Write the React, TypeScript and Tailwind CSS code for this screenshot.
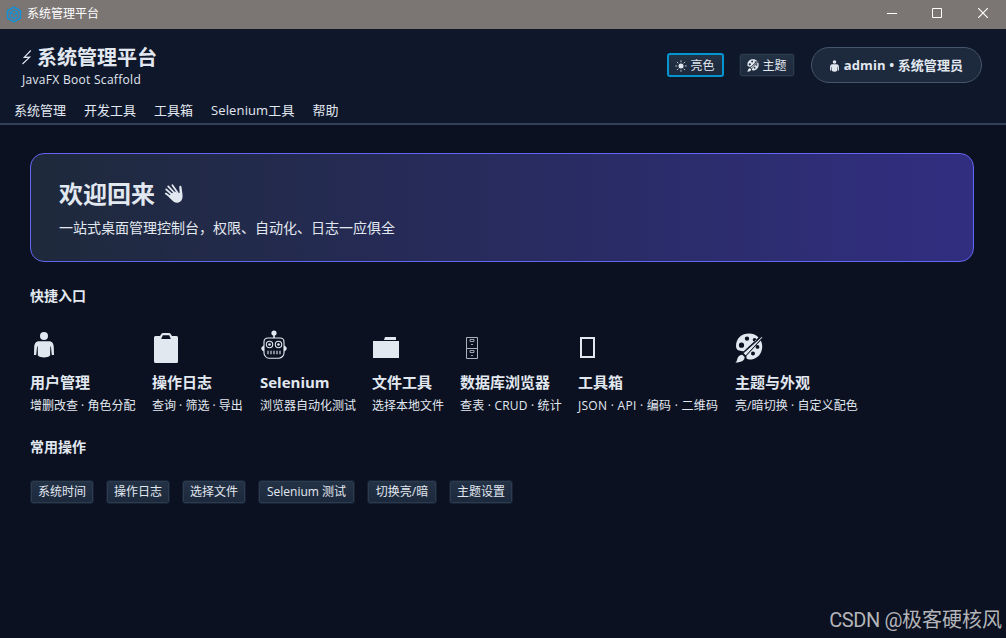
import React from 'react';

interface IconProps {
  className?: string;
}

interface QuickEntry {
  title: string;
  desc: string;
  width: string;
  tracking?: string;
  icon: React.ReactNode;
}

const PersonIcon: React.FC<IconProps> = ({ className }) => (
  <svg viewBox="0 0 20 26" className={className} fill="currentColor">
    <circle cx="10" cy="4" r="4" />
    <path d="M5 9.2h10c3.2 0 4.6 2.2 4.8 6l.2 7.8h-2.2l-.9-8.6h-.6l-.2 9.2c-1.5 1.4-3.6 1.9-6.1 1.9s-4.6-.5-6.1-1.9l-.2-9.2h-.6L2.2 23H0l.2-7.8c.2-3.8 1.6-6 4.8-6z" />
  </svg>
);

const ClipboardIcon: React.FC<IconProps> = ({ className }) => (
  <svg viewBox="0 0 24 30" className={className} fill="currentColor">
    <path
      fillRule="evenodd"
      d="M1.500 3H6L7.500.8Q8 0 9 0h6Q16 0 16.500.8L18 3h4.500Q24 3 24 4.500v24Q24 30 22.500 30h-21Q0 30 0 28.500v-24Q0 3 1.500 3zM8.800 2.200 7.200 6h9.600l-1.600-3.800z"
    />
  </svg>
);

const RobotIcon: React.FC<IconProps> = ({ className }) => (
  <svg viewBox="0 0 26 29" className={className} fill="none" stroke="currentColor" strokeWidth="1.1">
    <circle cx="13" cy="3" r="2.6" fill="currentColor" stroke="none" />
    <path d="M13 4v4" strokeWidth="1.6" />
    <path d="M7 8h12q4 0 4 4v11q0 2-1.500 3.500T18 28.200H8q-2 0-3.500-1.700T3 23V12q0-4 4-4z" />
    <path d="M3 15.500Q.2 16.500.2 18.500T3 21.500zM23 15.500q2.800 1 2.800 3T23 21.500z" fill="currentColor" stroke="none" />
    <circle cx="8.500" cy="14.500" r="3.200" />
    <circle cx="17.500" cy="14.500" r="3.200" />
    <circle cx="8.500" cy="14.500" r="1.300" fill="currentColor" stroke="none" />
    <circle cx="17.500" cy="14.500" r="1.300" fill="currentColor" stroke="none" />
    <path d="M6 22.500h14" strokeWidth="3.600" strokeDasharray="2 1" opacity="0.55" />
  </svg>
);

const FolderIcon: React.FC<IconProps> = ({ className }) => (
  <svg viewBox="0 0 26 21" className={className} fill="currentColor">
    <path d="M12 0h11v3H11zM0 4h26v17H0z" />
  </svg>
);

const CabinetIcon: React.FC<IconProps> = ({ className }) => (
  <svg viewBox="0 0 12 22" className={className} fill="none" stroke="currentColor" opacity="0.75">
    <path d="M.5.5h11v21H.5zM.5 11.500h11" />
    <path d="M4 2.500h4v2H4zM5 7.500h2M4 13.500h4v2H4zM5 18.500h2" strokeWidth="0.9" />
  </svg>
);

const PaletteIcon: React.FC<IconProps> = ({ className }) => (
  <svg viewBox="0 0 28 30" className={className}>
    <path
      fill="currentColor"
      fillRule="evenodd"
      d="M1 13C1 5 7 .5 14 .5c4 0 7.200 1.300 9.500 4L9 18c-1.500.6-3-.3-4.500-.5-2-.2-3.500-1.500-3.500-4.500zM12 3.400a2.200 2.200 0 1 0 0 4.400 2.200 2.200 0 0 0 0-4.400zM6.500 9.600a2.600 2.600 0 1 0 0 5.200 2.600 2.600 0 0 0 0-5.200zM19.500 5a1.800 1.800 0 1 0 0 3.600 1.800 1.800 0 0 0 0-3.600zM25.800 7.500c1.700 3.300 1.900 7 .7 10.500-2 6-7.500 9-12.500 8.500-2.600-.3-2.800-2-2.500-4zM22.500 12a1.900 1.900 0 1 0 0 3.800 1.900 1.900 0 0 0 0-3.800zM18 18.400a2 2 0 1 0 0 4 2 2 0 0 0 0-4z"
    />
    <path
      fill="currentColor"
      stroke="#0b1120"
      strokeWidth="0.9"
      d="M28 4.200 10.800 22.800 8 20.300 26.500 3.800z"
    />
    <path fill="currentColor" d="M7.300 21.700l2.300 2.300c.2 3-2.500 5.500-9.300 5.500 1.700-1 1.500-2.300 2.200-4.300.8-2.300 2.800-3.500 4.800-3.500z" />
  </svg>
);

const WaveIcon: React.FC<IconProps> = ({ className }) => (
  <svg viewBox="0 0 20 19" className={className} fill="none" stroke="currentColor" strokeLinecap="round">
    <path d="M2.200 5.400 9 11.500M4.200 2.400 11 9.500M8.400 1.300l5.400 7.700M1.800 9.600 8 14" strokeWidth="1.800" />
    <path
      fill="currentColor"
      stroke="none"
      d="m7.500 9.500 3.500-2 3 1.800 1.600-.3-.3-5.800c0-1.700 1.900-1.800 2.200-.2l1 7.500c.6 5-1.700 8-5.200 8.200-2.500.1-4-1-5.500-2.600L4.500 12.800z"
    />
  </svg>
);

const SunIcon: React.FC<IconProps> = ({ className }) => (
  <svg viewBox="0 0 12 12" className={className} fill="none" stroke="currentColor" strokeWidth="0.8">
    <circle cx="6" cy="6" r="2.500" fill="currentColor" stroke="none" />
    <path d="M6 .3v1.900M6 9.800v1.900M.3 6h1.900M9.800 6h1.900M1.900 1.900l1.400 1.400M8.700 8.700l1.400 1.400M1.900 10.100l1.400-1.400M8.700 3.300l1.400-1.400" />
  </svg>
);

const entries: QuickEntry[] = [
  { title: '用户管理', desc: '增删改查 · 角色分配', width: 'w-[106px]', icon: <PersonIcon className="mb-1 ml-1 h-[26px] w-5" /> },
  { title: '操作日志', desc: '查询 · 筛选 · 导出', width: 'w-[92px]', icon: <ClipboardIcon className="-mb-px ml-[2px] h-[30px] w-6" /> },
  { title: 'Selenium', desc: '浏览器自动化测试', width: 'w-[96px]', icon: <RobotIcon className="mb-[3px] ml-px h-[29px] w-[26px]" /> },
  { title: '文件工具', desc: '选择本地文件', width: 'w-[72px]', icon: <FolderIcon className="mb-1 ml-px h-[21px] w-[26px]" /> },
  { title: '数据库浏览器', desc: '查表 · CRUD · 统计', width: 'w-[102px]', tracking: 'tracking-[0.2px]', icon: <CabinetIcon className="mb-[3px] ml-[6px] h-[22px] w-3" /> },
  { title: '工具箱', desc: 'JSON · API · 编码 · 二维码', width: 'w-[141px]', tracking: 'tracking-[0.28px]', icon: <div className="mb-1 ml-[2px] h-[21px] w-[15px] border-2 border-slate-200" /> },
  { title: '主题与外观', desc: '亮/暗切换 · 自定义配色', width: 'w-[130px]', tracking: 'tracking-[0.08px]', icon: <PaletteIcon className="-mb-px h-[30px] w-7" /> },
];

const menus = ['系统管理', '开发工具', '工具箱', 'Selenium工具', '帮助'];

const actions = [
  { label: '系统时间', width: 'w-[62px]' },
  { label: '操作日志', width: 'w-[62px]' },
  { label: '选择文件', width: 'w-[62px]' },
  { label: 'Selenium 测试', width: 'w-[95px]' },
  { label: '切换亮/暗', width: 'w-[68px]' },
  { label: '主题设置', width: 'w-[62px]' },
];

const TitleBar = () => (
  <div className="flex h-[29px] shrink-0 items-center bg-[#7b7574] text-white">
    <svg viewBox="0 0 16 18" className="ml-[6px] h-[17px] w-4" fill="none" stroke="#1290d8" strokeWidth="1.6" strokeLinejoin="round">
      <path d="M8 1.200 14.800 5v8L8 16.800 1.200 13V5z" />
      <path d="M8 4.300 12 6.600v4.800L8 13.700l-4-2.300V6.600zM4 6.600 8 9l4-2.400M8 9v4.700" strokeWidth="1.200" />
    </svg>
    <span className="ml-[5px] pb-px text-xs leading-none">系统管理平台</span>
    <div className="ml-auto flex items-center pr-[18px] pb-[3px]">
      <svg viewBox="0 0 10 10" className="mr-[35px] h-[10px] w-[10px]" stroke="currentColor"><path d="M0 5.500h10" /></svg>
      <svg viewBox="0 0 10 10" className="mr-9 h-[10px] w-[10px]" fill="none" stroke="currentColor"><path d="M.5.500h9v9h-9z" /></svg>
      <svg viewBox="0 0 10 10" className="h-[10px] w-[10px]" stroke="currentColor" strokeWidth="1.200"><path d="m0 0 10 10M10 0 0 10" /></svg>
    </div>
  </div>
);

const App: React.FC = () => {
  return (
    <div className="flex h-[638px] w-[1006px] flex-col overflow-hidden bg-[#0b1120] font-['Open_Sans','Noto_Sans_CJK_SC',sans-serif] whitespace-nowrap text-slate-200">
      <TitleBar />

      {/* Header */}
      <header className="flex h-24 shrink-0 flex-col border-b-2 border-slate-700 bg-slate-900">
        <div className="flex h-[68px] items-start justify-between pr-6 pl-[22px]">
          <div className="pt-[15px]">
            <div className="flex h-[27px] items-center">
              <svg viewBox="0 0 10 15" className="mr-[5px] h-[15px] w-[10px]" fill="none" stroke="currentColor">
                <path d="M8.800.5 2.200 7.400l5.500-.3L.5 14" strokeWidth="1.100" />
              </svg>
              <h1 className="text-xl font-bold">系统管理平台</h1>
            </div>
            <p className="mt-px text-xs leading-4 tracking-[0.3px]">JavaFX Boot Scaffold</p>
          </div>
          <div className="flex items-center pt-[18px]">
            <button className="flex h-6 w-[57px] items-center justify-center gap-[3px] rounded-[3px] border-2 border-[#0595cf] bg-linear-to-b/srgb from-[#243246] to-slate-800 pt-px pr-px text-xs">
              <SunIcon className="h-3 w-3" />
              亮色
            </button>
            <button className="ml-4 flex h-[22px] w-[54px] items-center justify-center gap-[3px] rounded-[2px] border border-[#2b3b50] bg-linear-to-b/srgb from-[#243246] to-slate-800 pt-px text-xs shadow-[0_0_0_1px_#172132]">
              <PaletteIcon className="h-[13px] w-3" />
              主题
            </button>
            <div className="ml-[17px] flex h-9 w-[171px] items-center justify-center rounded-full border border-slate-600 bg-slate-800 pt-px text-[13px] font-bold tracking-[0.1px]">
              <PersonIcon className="mr-[5px] h-3 w-[9px]" />
              admin • 系统管理员
            </div>
          </div>
        </div>
        <nav className="flex gap-[18px] pl-[14px] text-[13px] leading-[26px]">
          {menus.map((menu) => (
            <span key={menu} className={menu.startsWith('Selenium') ? 'tracking-[0.12px]' : ''}>{menu}</span>
          ))}
        </nav>
      </header>

      <main className="flex flex-col px-[30px] pt-7">
        {/* Welcome banner */}
        <section className="h-[109px] w-[944px] rounded-[14px] border border-[#6366f1] bg-linear-to-r/srgb from-[#1e293b] to-[#312e81] pt-[22px] pl-7">
          <div className="flex h-9 items-center">
            <h2 className="text-2xl font-bold">欢迎回来</h2>
            <WaveIcon className="mb-px ml-[9px] h-[19px] w-5" />
          </div>
          <p className="mt-[5px] text-sm leading-[22px]">一站式桌面管理控制台，权限、自动化、日志一应俱全</p>
        </section>

        <h3 className="mt-6 text-sm leading-5 font-bold">快捷入口</h3>
        <div className="mt-[22px] flex gap-4">
          {entries.map((entry) => (
            <div key={entry.title} className={entry.width}>
              <div className="flex h-9 items-end pb-0.5">{entry.icon}</div>
              <p className="mt-[7px] text-[15px] leading-[22px] font-bold">{entry.title}</p>
              <p className={`mt-1 text-xs leading-[18px] ${entry.tracking ?? ''}`}>{entry.desc}</p>
            </div>
          ))}
        </div>

        {/* Common actions */}
        <h3 className="mt-[22px] text-sm leading-5 font-bold">常用操作</h3>
        <div className="mt-6 flex gap-[14px] pl-px">
          {actions.map((action) => (
            <button
              key={action.label}
              className={`${action.width} flex h-[22px] items-center justify-center rounded-[2px] border border-[#2b3b50] bg-linear-to-b/srgb from-[#243246] to-slate-800 text-xs shadow-[0_0_0_1px_#172132]`}
            >
              {action.label}
            </button>
          ))}
        </div>
      </main>

      <div className="mt-auto flex justify-end pr-1 pb-[3px] font-['Roboto','Noto_Sans_CJK_SC',sans-serif] text-xl leading-[30px] text-[#b4b5b9]">
        <span className="tracking-[-0.4px] whitespace-pre">CSDN @</span>
        <span>极客硬核风</span>
      </div>
    </div>
  );
};

export default App;
